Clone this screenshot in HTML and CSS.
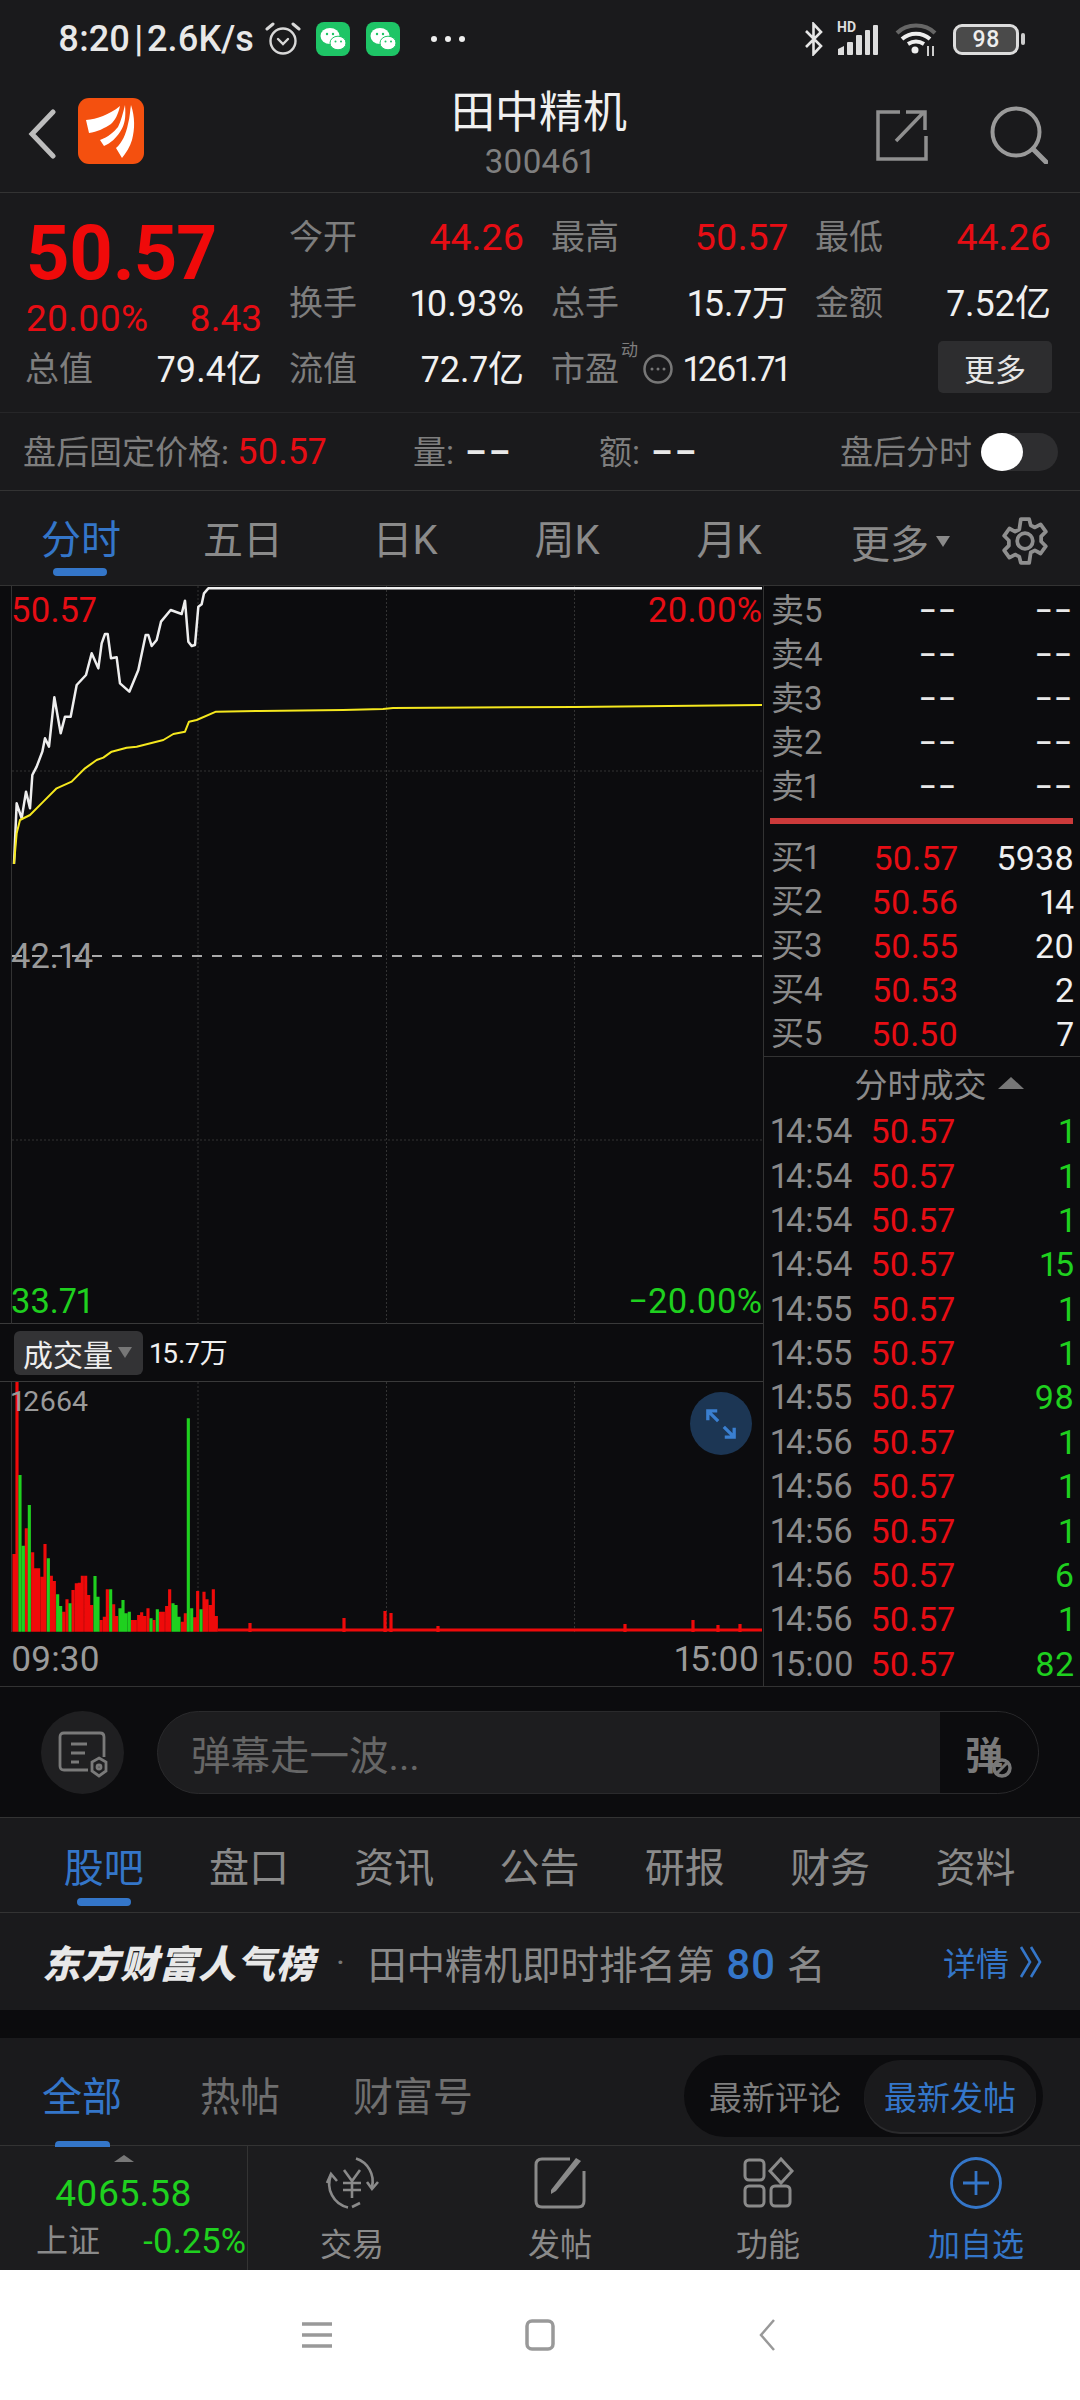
FILE: index.html
```html
<!DOCTYPE html>
<html lang="zh">
<head>
<meta charset="utf-8">
<title>田中精机</title>
<link rel="stylesheet" href="styles.css">
</head>
<body>
<div class="app">
  <div class="status">
    <span class="clock">8:20 | 2.6K/s</span>
    <svg class="st-alarm" viewBox="0 0 36 34"><g fill="none" stroke="#d8d8d8" stroke-width="2.4" stroke-linecap="round"><circle cx="18" cy="19" r="12.5"/><path d="M2 7l6-5M34 7l-6-5" stroke-width="3"/><path d="M13 17l5 5 5-5"/></g></svg>
    <svg class="st-wx" viewBox="0 0 34 34"><rect width="34" height="34" rx="8" fill="#1ec566"/><ellipse cx="14" cy="14" rx="9.5" ry="8" fill="#fff"/><ellipse cx="22" cy="21" rx="8" ry="6.8" fill="#fff" stroke="#1ec566"/><circle cx="11" cy="12" r="1.2" fill="#1ec566"/><circle cx="17" cy="12" r="1.2" fill="#1ec566"/><circle cx="19.500" cy="19.500" r="1" fill="#1ec566"/><circle cx="25" cy="19.500" r="1" fill="#1ec566"/></svg>
    <svg class="st-wx st-wx2" viewBox="0 0 34 34"><rect width="34" height="34" rx="8" fill="#1ec566"/><ellipse cx="14" cy="14" rx="9.5" ry="8" fill="#fff"/><ellipse cx="22" cy="21" rx="8" ry="6.8" fill="#fff" stroke="#1ec566"/><circle cx="11" cy="12" r="1.2" fill="#1ec566"/><circle cx="17" cy="12" r="1.2" fill="#1ec566"/><circle cx="19.500" cy="19.500" r="1" fill="#1ec566"/><circle cx="25" cy="19.500" r="1" fill="#1ec566"/></svg>
    <svg class="st-dots" viewBox="0 0 37 8"><circle cx="4" cy="4" r="3" fill="#eee"/><circle cx="18" cy="4" r="3" fill="#eee"/><circle cx="32" cy="4" r="3" fill="#eee"/></svg>
    <span class="st-fill"></span>
    <svg class="st-bt" viewBox="0 0 20 34"><path d="M2 9l15 15-7.500 8V2L17 10 2 25" fill="none" stroke="#e6e6e6" stroke-width="2.600"/></svg>
    <div class="st-signal">
      <span class="st-hd">HD</span>
      <svg class="st-bars" viewBox="0 0 42 30"><g fill="#ddd"><path d="M1 24l6-3v9H1z"/><rect x="10" y="17" width="6" height="13" rx="1"/><rect x="19" y="10" width="6" height="20" rx="1" fill="#ddd"/><rect x="28" y="5" width="5" height="25" rx="1"/><rect x="36" y="0" width="5" height="30" rx="1"/></g></svg>
    </div>
    <svg class="st-wifi" viewBox="0 0 42 34"><g fill="none" stroke-width="4"><path d="M2 11C12 1 30 1 40 11" stroke="#666"/><path d="M7 17c8-7 20-7 28 0M13 22c5-3 11-3 16 0" stroke="#eee"/></g><circle cx="20" cy="28" r="3.500" fill="#eee"/><path d="M33 24v10M38 24v10" stroke="#ccc" stroke-width="2"/></svg>
    <div class="st-batt"><span class="st-batt-num">98</span></div>
    <span class="st-cap"></span>
  </div>

  <header class="header">
    <svg class="back" viewBox="0 0 28 50"><path d="M25 3L4 25l21 22" fill="none" stroke="#bdbdbd" stroke-width="5" stroke-linecap="round"/></svg>
    <svg class="logo" viewBox="0 0 66 66"><rect width="66" height="66" rx="11" fill="#f4500f"/><g fill="#fff"><path d="M8 22c11-1 23-5 34-14-2 9-5 14-9 18-6 4-14 8-22 9z"/><path d="M22 42c8-3 14-8 18-13 3-6 5-14 7-22 1 12 0 20-5 27-4 6-9 11-16 14z"/><path d="M38 50c6-5 10-14 12-24 2-7 2-14 3-19 4 12 4 24 1 35-2 7-6 13-10 18z"/></g></svg>
    <div class="title">
      <div class="title-name">田中精机</div>
      <div class="title-code">300461</div>
    </div>
    <svg class="share" viewBox="0 0 52 52"><path d="M24 3H2v47h48V27" fill="none" stroke="#8f8f8f" stroke-width="3.500"/><path d="M20 32L47 4M30 3h19v18" fill="none" stroke="#8f8f8f" stroke-width="3.500"/></svg>
    <svg class="search" viewBox="0 0 58 58"><circle cx="26" cy="26" r="23.500" fill="none" stroke="#9a9a9a" stroke-width="4"/><path d="M43 43l13 13" stroke="#9a9a9a" stroke-width="5" stroke-linecap="round"/></svg>
  </header>

  <section class="quote">
    <div class="big">
      <div class="big-price">50.57</div>
      <div class="big-change"><span>20.00%</span><span>8.43</span></div>
    </div>
    <div class="cell"><span class="lab">今开</span><span class="val red">44.26</span></div>
    <div class="cell"><span class="lab">最高</span><span class="val red">50.57</span></div>
    <div class="cell"><span class="lab">最低</span><span class="val red">44.26</span></div>
    <div class="cell"><span class="lab">换手</span><span class="val">10.93%</span></div>
    <div class="cell"><span class="lab">总手</span><span class="val">15.7万</span></div>
    <div class="cell"><span class="lab">金额</span><span class="val">7.52亿</span></div>
    <div class="cell"><span class="lab">总值</span><span class="val">79.4亿</span></div>
    <div class="cell"><span class="lab">流值</span><span class="val">72.7亿</span></div>
    <div class="cell pe"><span class="lab">市盈</span><span class="pe-sup">动</span><svg class="pe-icon" viewBox="0 0 30 30"><circle cx="15" cy="15" r="13.500" fill="none" stroke="#777" stroke-width="2.500"/><circle cx="9" cy="15" r="1.500" fill="#777"/><circle cx="15" cy="15" r="1.500" fill="#777"/><circle cx="21" cy="15" r="1.500" fill="#777"/></svg><span class="val pe-val">1261.71</span></div>
    <div class="cell more-cell"><button class="more">更多</button></div>
  </section>

  <section class="after">
    <span class="a-lab a-price">盘后固定价格: <b class="red">50.57</b></span>
    <span class="a-lab a-vol">量: <b class="a-dash">––</b></span>
    <span class="a-lab a-amt">额: <b class="a-dash">––</b></span>
    <span class="a-lab a-switch">盘后分时</span>
    <span class="toggle"><span class="knob"></span></span>
  </section>

  <nav class="tabs">
    <span class="tab active">分时<i class="bar"></i></span>
    <span class="tab">五日</span>
    <span class="tab">日K</span>
    <span class="tab">周K</span>
    <span class="tab">月K</span>
    <div class="tab-last">
      <span class="tab-more">更多</span><span class="tri"></span>
      <svg class="gear" viewBox="0 0 48 48"><g fill="none" stroke="#8f8f8f" stroke-width="3.600" stroke-linejoin="round"><path d="M20 3h8l1.500 6 4 2 5.500-3 5 7-4.500 4.500v5L44 29l-5 7-5.500-3-4 2L28 45h-8l-1.500-6-4-2L9 40l-5-7 4.500-4.500v-5L4 19l5-7 5.500 3 4-2z"/><circle cx="24" cy="24" r="7.500"/></g></svg>
    </div>
  </nav>

  <main class="market">
    <div class="charts">
      <div class="price-area">
        <svg class="price-svg" viewBox="0 586 763 738">
          <g fill="none" stroke="#333" stroke-width="1">
            <path d="M11.500 586V1324"/>
            <path d="M198 586V1324M386.500 586V1324M574.500 586V1324M12 771H762M12 1140H762" stroke-dasharray="2 2"/>
          </g>
          <path d="M12 956H762" fill="none" stroke="#aaa" stroke-width="2" stroke-dasharray="10 10"/>
          <g transform="translate(0 570) scale(.33333)" fill="none" stroke-linejoin="round">
            <path stroke="#eee" stroke-width="7.500" d="M42 882L50 700L65 745L78 665L90 715L97 615L110 590L127 545L135 505L147 530L163 382L182 490L195 440L212 440L230 345L258 315L275 250L295 295L305 220L315 192L323 192L333 265L350 262L360 340L388 365L415 300L437 195L445 195L455 228L470 210L483 155L512 120L545 132L555 92L565 215L575 228L585 225L595 110L605 103L612 70L625 55L2286 55"/>
            <path stroke="#f5e81e" stroke-width="6" d="M42 882L50 790L60 750L90 735L130 695L170 655L215 635L255 595L290 570L310 563L335 545L380 533L410 530L490 510L520 492L555 485L567 455L590 450L648 425L780 423"/>
          </g>
          <path fill="none" stroke="#f5e81e" stroke-width="2" d="M260 711L343 710L383 709L393 708L575 707L762 705"/>
        </svg>
        <span class="p-label p-tl red">50.57</span>
        <span class="p-label p-tr red">20.00%</span>
        <span class="p-label p-ml">42.14</span>
        <span class="p-label p-bl green">33.71</span>
        <span class="p-label p-br green">−20.00%</span>
      </div>
      <div class="vol-head">
        <span class="vol-pill">成交量<i class="vol-tri"></i></span>
        <span class="vol-num">15.7万</span>
      </div>
      <div class="vol-area">
        <svg class="vol-svg" viewBox="0 1382 763 250">
          <g fill="none" stroke="#333" stroke-width="1">
            <path d="M11.500 1382V1632"/>
            <path d="M198 1382V1632M386.500 1382V1632M574.500 1382V1632" stroke-dasharray="2 2"/>
          </g>
          <g transform="translate(0 1380) scale(.33333)" fill="none" stroke-width="9.400">
            <path stroke="#ef0a0a" d="M42 755V522M51 755V5M79 755V445M98 755V517M107 755V565M116 755V565M126 755V590M135 755V492M154 755V587M163 755V603M191 755V695M201 755V658M219 755V630M229 755V610M238 755V608M247 755V587M257 755V587M266 755V645M275 755V675M303 755V720M313 755V710M322 755V628M341 755V673M350 755V708M397 755V720M406 755V720M416 755V705M425 755V697M434 755V708M444 755V685M462 755V720M481 755V695M490 755V695M500 755V678M509 755V628M547 755V725M556 755V700M584 755V712M593 755V633M612 755V635M621 755V658M631 755V675M640 755V628M649 755V708"/>
            <path stroke="#1fd01f" d="M60 755V285M70 755V497M88 755V375M145 755V535M173 755V643M182 755V678M210 755V670M285 755V588M294 755V650M332 755V628M360 755V685M369 755V660M378 755V700M388 755V695M453 755V715M472 755V688M519 755V670M528 755V675M537 755V710M565 755V115M575 755V685M603 755V688"/>
          </g>
          <path fill="none" stroke="#ef0a0a" stroke-width="3.200" d="M218 1630H762M250 1632V1623M344 1632V1618M385 1632V1611M391 1632V1613M438 1632V1626M625 1632V1624M693 1632V1620M718 1632V1625M740 1632V1624"/>
        </svg>
        <span class="vol-max">12664</span>
        <button class="expand"><svg viewBox="0 0 34 34"><path d="M3 13V3h10M3 3l11 11M31 21v10H21M31 31L20 20" fill="none" stroke="#3a7fd0" stroke-width="3.500"/></svg></button>
      </div>
      <div class="times"><span>09:30</span><span>15:00</span></div>
    </div>

    <aside class="book">
      <div class="asks">
        <div class="row"><span class="k">卖5</span><span class="p dash">––</span><span class="q dash">––</span></div>
        <div class="row"><span class="k">卖4</span><span class="p dash">––</span><span class="q dash">––</span></div>
        <div class="row"><span class="k">卖3</span><span class="p dash">––</span><span class="q dash">––</span></div>
        <div class="row"><span class="k">卖2</span><span class="p dash">––</span><span class="q dash">––</span></div>
        <div class="row"><span class="k">卖1</span><span class="p dash">––</span><span class="q dash">––</span></div>
      </div>
      <div class="split"></div>
      <div class="bids">
        <div class="row"><span class="k">买1</span><span class="p red">50.57</span><span class="q">5938</span></div>
        <div class="row"><span class="k">买2</span><span class="p red">50.56</span><span class="q">14</span></div>
        <div class="row"><span class="k">买3</span><span class="p red">50.55</span><span class="q">20</span></div>
        <div class="row"><span class="k">买4</span><span class="p red">50.53</span><span class="q">2</span></div>
        <div class="row"><span class="k">买5</span><span class="p red">50.50</span><span class="q">7</span></div>
      </div>
      <div class="ticks-head">分时成交<i class="up-tri"></i></div>
      <div class="ticks">
        <div class="row tick"><span class="k">14:54</span><span class="p red">50.57</span><span class="q green">1</span></div>
        <div class="row tick"><span class="k">14:54</span><span class="p red">50.57</span><span class="q green">1</span></div>
        <div class="row tick"><span class="k">14:54</span><span class="p red">50.57</span><span class="q green">1</span></div>
        <div class="row tick"><span class="k">14:54</span><span class="p red">50.57</span><span class="q green">15</span></div>
        <div class="row tick"><span class="k">14:55</span><span class="p red">50.57</span><span class="q green">1</span></div>
        <div class="row tick"><span class="k">14:55</span><span class="p red">50.57</span><span class="q green">1</span></div>
        <div class="row tick"><span class="k">14:55</span><span class="p red">50.57</span><span class="q green">98</span></div>
        <div class="row tick"><span class="k">14:56</span><span class="p red">50.57</span><span class="q green">1</span></div>
        <div class="row tick"><span class="k">14:56</span><span class="p red">50.57</span><span class="q green">1</span></div>
        <div class="row tick"><span class="k">14:56</span><span class="p red">50.57</span><span class="q green">1</span></div>
        <div class="row tick"><span class="k">14:56</span><span class="p red">50.57</span><span class="q green">6</span></div>
        <div class="row tick"><span class="k">14:56</span><span class="p red">50.57</span><span class="q green">1</span></div>
        <div class="row tick"><span class="k">15:00</span><span class="p red">50.57</span><span class="q green">82</span></div>
      </div>
    </aside>
  </main>

  <section class="danmu">
    <div class="dm-icon"><svg viewBox="0 0 50 48"><g fill="none" stroke="#7a7a7a" stroke-width="2.800"><path d="M30 39H6q-4 0-4-4V6q0-4 4-4h36q4 0 4 4v20"/><path d="M13 13h16M13 22h14M13 31h8"/><path d="M41 27l7 4v9l-7 5-7-5v-9z"/><circle cx="41" cy="36" r="2"/></g></svg></div>
    <div class="dm-input">
      <span class="dm-text">弹幕走一波...</span>
      <span class="dm-btn"><b>弹</b><svg class="dm-ban" viewBox="0 0 20 20"><circle cx="10" cy="10" r="8" fill="none" stroke="#777" stroke-width="3.500"/><path d="M5 15L15 5" stroke="#777" stroke-width="3"/></svg></span>
    </div>
  </section>

  <nav class="subtabs">
    <span class="sub active">股吧<i class="bar"></i></span>
    <span class="sub">盘口</span>
    <span class="sub">资讯</span>
    <span class="sub">公告</span>
    <span class="sub">研报</span>
    <span class="sub">财务</span>
    <span class="sub">资料</span>
  </nav>

  <section class="rank">
    <span class="rank-brand">东方财富人气榜</span>
    <span class="rank-dot">·</span>
    <span class="rank-text">田中精机即时排名第 <b class="rank-num">80</b> 名</span>
    <span class="rank-more">详情<svg viewBox="0 0 24 34"><path d="M2 2l9 15-9 15M12 2l9 15-9 15" fill="none" stroke="#3476c9" stroke-width="2.600"/></svg></span>
  </section>

  <div class="gap"></div>

  <section class="posts">
    <span class="post-tab active">全部<i class="bar"></i></span>
    <span class="post-tab">热帖</span>
    <span class="post-tab post-tab-last">财富号</span>
    <div class="sort">
      <span class="sort-a">最新评论</span>
      <span class="sort-b">最新发帖</span>
    </div>
  </section>

  <footer class="dock">
    <div class="index">
      <i class="idx-tri"></i>
      <div class="idx-val green">4065.58</div>
      <div class="idx-row"><span class="idx-name">上证</span><span class="idx-pct green">-0.25%</span></div>
    </div>
    <div class="dock-item">
      <svg viewBox="0 0 60 52"><g fill="none" stroke="#8a8a8a" stroke-width="2.600"><path d="M34 1.500A24 24 0 0 1 50 30M26 50.500A24 24 0 0 1 9 18"/><path d="M5 26l4-9 6 7M56 25l-6 7-5-7M30 50l8-4"/><path d="M22 13l8 11 8-11M30 24v17M21 26h18M21 33h18"/></g></svg>
      <span>交易</span>
    </div>
    <div class="dock-item">
      <svg viewBox="0 0 60 52"><g fill="none" stroke="#8a8a8a" stroke-width="3"><path d="M40 2H12q-6 0-6 6v36q0 6 6 6h36q6 0 6-6V14"/></g><path d="M21 33L46 1l5 3-25 30-5 3z" fill="#8a8a8a"/></svg>
      <span>发帖</span>
    </div>
    <div class="dock-item">
      <svg viewBox="0 0 60 52"><g fill="none" stroke="#8a8a8a" stroke-width="3"><rect x="7" y="3" width="19" height="20" rx="4"/><path d="M43 2l11 12-11 12-11-12z"/><rect x="7" y="29" width="19" height="20" rx="4"/><rect x="33" y="29" width="19" height="20" rx="4"/></g></svg>
      <span>功能</span>
    </div>
    <div class="dock-item accent">
      <svg viewBox="0 0 60 52"><g fill="none" stroke="#3476c9" stroke-width="2.800"><circle cx="30" cy="26" r="24.500"/><path d="M17 26h26M30 14v24"/></g></svg>
      <span>加自选</span>
    </div>
  </footer>

  <div class="sysnav">
    <svg class="sys-menu" viewBox="0 0 30 26"><path d="M0 2h30M0 13h30M0 24h30" stroke="#999" stroke-width="3.500"/></svg>
    <svg class="sys-home" viewBox="0 0 30 32"><rect x="2" y="2" width="26" height="28" rx="5" fill="none" stroke="#999" stroke-width="3.500"/></svg>
    <svg class="sys-back" viewBox="0 0 18 32"><path d="M16 1L3 16l13 15" fill="none" stroke="#999" stroke-width="2.500"/></svg>
  </div>
</div>
</body>
</html>
```

FILE: styles.css
```css
* { box-sizing: border-box; }
html, body { margin: 0; padding: 0; background: #1a1a1c; }
body { font-family: Roboto, "Noto Sans CJK SC", sans-serif; color: #8a8a8a; }
.app { width: 1080px; height: 2400px; display: flex; flex-direction: column; overflow: hidden; background: #1a1a1c; font-variant-numeric: proportional-nums; }
i { display: block; font-style: normal; }
svg { display: block; flex: none; }
button { border: 0; padding: 0; font: inherit; }
.red { color: #e60d14; }
.green { color: #1fd01f; }

/* status bar */
.status { height: 78px; padding: 0 0 0 58px; display: flex; align-items: center; }
.clock { font-size: 36px; font-weight: 500; color: #e8e8e8; width: 205px; white-space: nowrap; word-spacing: -5px; }
.st-alarm { width: 36px; height: 34px; margin-left: 2px; }
.st-wx { width: 34px; height: 34px; margin-left: 15px; }
.st-wx2 { margin-left: 16px; }
.st-dots { width: 37px; height: 8px; margin-left: 30px; }
.st-fill { flex: 1; }
.st-bt { width: 20px; height: 34px; }
.st-signal { position: relative; width: 42px; height: 32px; margin-left: 13px; }
.st-bars { width: 42px; height: 30px; position: absolute; left: 0; bottom: 0; }
.st-hd { position: absolute; left: 0; top: -3px; font-size: 14px; line-height: 14px; font-weight: 700; color: #ddd; }
.st-wifi { width: 42px; height: 34px; margin-left: 16px; }
.st-batt { width: 66px; height: 31px; margin-left: 16px; border: 3px solid #ddd; border-radius: 9px; background: #4a4a4a; background-clip: padding-box; display: flex; align-items: center; justify-content: center; }
.st-batt-num { font-size: 23px; font-weight: 500; color: #eee; line-height: 1; }
.st-cap { width: 4px; height: 12px; background: #ccc; margin: 0 55px 0 2px; border-radius: 2px; }

/* header */
.header { height: 115px; display: flex; align-items: center; padding-left: 28px; border-bottom: 1px solid #333; position: relative; }
.back { width: 28px; height: 50px; margin-top: -2px; }
.logo { width: 66px; height: 66px; margin: -8px 0 0 22px; }
.title { width: 340px; margin-left: 225px; text-align: center; margin-top: -2px; }
.title-name { font-size: 44px; line-height: 50px; color: #f0f0f0; }
.title-code { font-size: 33px; line-height: 38px; color: #7f7f7f; margin-top: 5px; }
.share { width: 52px; height: 52px; margin-left: 167px; }
.search { width: 58px; height: 58px; margin-left: 62px; }

/* quote */
.quote { height: 220px; padding: 12px 0 0 26px; display: grid; grid-template-columns: 236px 234px 236px 235px; grid-template-rows: repeat(3, 66px); column-gap: 28px; border-bottom: 1px solid #262628; }
.big { grid-row: span 2; grid-column: 1; position: relative; }
.big-price { font-size: 76px; font-weight: 700; line-height: 80px; color: #f00a0a; margin-top: 8px; letter-spacing: -1px; }
.big-change { display: flex; justify-content: space-between; font-size: 37px; line-height: 40px; color: #e60d14; margin-top: 6px; }
.cell { display: flex; align-items: center; justify-content: space-between; }
.big + .cell { grid-column: 2; }
.lab { font-size: 34px; line-height: 50px; color: #7e7e7e; margin: -3px 0 0 -1px; }
.val { font-size: 36px; line-height: 50px; color: #f0f0f0; margin-top: 0; }
.val.red { color: #e60d14; font-size: 37.500px; margin-top: -2px; }
.pe { justify-content: flex-start; position: relative; }
.pe-sup { font-size: 17px; color: #7e7e7e; align-self: flex-start; margin-top: -1px; margin-left: 2px; }
.pe-icon { width: 30px; height: 30px; margin: -2px 0 0 5px; }
.pe-val { margin-left: auto; font-size: 35px; letter-spacing: -1.200px; }
.more-cell { justify-content: flex-end; }
.more { width: 114px; height: 52px; border-radius: 5px; background: #2d2d2f; color: #e6e6e6; font-size: 31px; margin: -6px -1px 0 0; }

/* after hours */
.after { height: 78px; display: flex; align-items: center; padding: 2px 0 0 23px; border-bottom: 1px solid #333; font-size: 33px; position: relative; line-height: 44px; }
.a-lab { color: #7e7e7e; white-space: nowrap; }
.a-price { width: 390px; }
.a-vol { width: 186px; }
.a-amt { width: 241px; }
.a-price b { font-weight: 400; font-size: 36px; }
.a-dash { color: #e8e8e8; font-weight: 700; letter-spacing: 3px; margin-left: 3px; }
.a-switch { width: 141px; }
.toggle { width: 77px; height: 38px; border-radius: 19px; background: #2e2e30; position: relative; margin-top: -2px; }
.knob { position: absolute; left: 0; top: 0; width: 42px; height: 38px; border-radius: 50%; background: #fff; }

/* tabs */
.tabs { height: 95px; padding-top: 6px; display: grid; grid-template-columns: repeat(5, 162px) 1fr; align-items: center; border-bottom: 1px solid #333; }
.tab { position: relative; font-size: 40px; color: #8a8a8a; text-align: center; line-height: 50px; }
.tab.active { color: #3476c9; }
.tab .bar { position: absolute; left: 53px; top: 52px; width: 54px; height: 8px; border-radius: 4px; background: #3476c9; }
.tab-last { display: flex; align-items: center; padding-left: 41px; }
.tab-more { font-size: 39px; color: #8a8a8a; }
.tri { width: 0; height: 0; margin-left: 7px; border-left: 7px solid transparent; border-right: 7px solid transparent; border-top: 11px solid #8a8a8a; }
.gear { width: 50px; height: 50px; margin-left: 50px; }

/* market */
.market { height: 1101px; display: flex; background: #0c0c0e; border-bottom: 1px solid #333; }
.charts { width: 764px; border-right: 1px solid #333; display: flex; flex-direction: column; }
.price-area { height: 738px; position: relative; border-bottom: 1px solid #3a3a3a; }
.price-svg { width: 763px; height: 738px; }
.p-label { position: absolute; font-size: 34.500px; line-height: 38px; color: #9a9a9a; }
.p-label.red { color: #e60d14; }
.p-label.green { color: #1fd01f; }
.p-tl { left: 11px; top: 5px; }
.p-tr { right: 1px; top: 5px; }
.p-ml { left: 11px; top: 351px; }
.p-bl { left: 11px; top: 696px; }
.p-br { right: 1px; top: 696px; }
.vol-head { height: 58px; display: flex; align-items: center; padding-left: 14px; border-bottom: 1px solid #3a3a3a; }
.vol-pill { width: 129px; height: 44px; border-radius: 6px; background: #333335; color: #eee; font-size: 30px; display: flex; align-items: center; padding-left: 9px; }
.vol-tri { margin-left: 5px; width: 0; height: 0; border-left: 7px solid transparent; border-right: 7px solid transparent; border-top: 11px solid #777; }
.vol-num { font-size: 28px; color: #f0f0f0; margin: -4px 0 0 7px; }
.vol-area { height: 250px; position: relative; }
.vol-svg { width: 763px; height: 250px; }
.vol-max { position: absolute; left: 11px; top: 4px; font-size: 28.500px; line-height: 32px; color: #9a9a9a; }
.expand { position: absolute; left: 690px; top: 10px; width: 62px; height: 63px; border-radius: 50%; background: #1c3654; display: flex; align-items: center; justify-content: center; }
.expand svg { width: 32px; height: 32px; }
.times { flex: 1; display: flex; justify-content: space-between; align-items: center; padding: 0 4px 0 11px; font-size: 35px; color: #9a9a9a; }

/* order book */
.book { flex: 1; padding: 3px 6px 0 7px; display: flex; flex-direction: column; }
.row { height: 44px; display: grid; grid-template-columns: 60px 127px 1fr; align-items: center; font-size: 34px; line-height: 44px; }
.k { color: #8a8a8a; white-space: nowrap; font-size: 33px; }
.p { text-align: right; }
.q { text-align: right; color: #f0f0f0; }
.q.green { color: #1fd01f; }
.dash { color: #e8e8e8; font-size: 26px; font-weight: 700; letter-spacing: 3px; }
.split { height: 6px; margin: 9px 1px 12px -1px; background: #cc3a3a; }
.ticks-head { height: 53px; margin: 0 -6px 0 -7px; border-top: 1px solid #333; display: flex; align-items: center; justify-content: center; font-size: 33px; color: #8a8a8a; padding-left: 34px; }
.up-tri { width: 0; height: 0; margin-left: 11px; border-left: 13px solid transparent; border-right: 13px solid transparent; border-bottom: 12px solid #777; }
.tick { height: 44.400px; grid-template-columns: 60px 124px 1fr; }
.tick .k { font-size: 34.500px; }

/* danmu */
.danmu { height: 131px; display: flex; align-items: center; padding: 0 41px; background: #0c0c0e; border-bottom: 1px solid #333; }
.dm-icon { width: 83px; height: 83px; border-radius: 50%; background: #1f1f21; display: flex; align-items: center; justify-content: center; }
.dm-icon svg { width: 50px; height: 48px; margin-top: 6px; }
.dm-input { width: 882px; height: 83px; margin-left: 33px; border-radius: 42px; background: #1d1d1f; border: 1px solid #2a2a2c; display: flex; align-items: center; overflow: hidden; }
.dm-text { flex: 1; padding-left: 33px; font-size: 39.500px; color: #666; }
.dm-btn { width: 98px; height: 100%; background: #0c0c0e; position: relative; display: flex; align-items: center; padding-left: 25px; }
.dm-btn b { font-size: 38px; color: #7a7a7a; font-weight: 700; }
.dm-ban { position: absolute; left: 52px; top: 46px; width: 20px; height: 20px; }

/* sub tabs */
.subtabs { height: 95px; padding: 7px 0 0 31px; display: grid; grid-template-columns: repeat(7, 145.300px); align-items: center; border-bottom: 1px solid #333; }
.sub { position: relative; font-size: 40px; line-height: 50px; text-align: center; color: #8a8a8a; }
.sub.active { color: #3476c9; }
.sub .bar { position: absolute; left: 46px; top: 54px; width: 54px; height: 8px; border-radius: 4px; background: #3476c9; }

/* rank */
.rank { height: 97px; display: flex; align-items: center; padding-left: 42px; }
.rank-brand { font-size: 38px; font-weight: 900; font-style: italic; color: #e8e8e8; width: 294px; white-space: nowrap; letter-spacing: 1px; }
.rank-dot { width: 32px; font-size: 34px; color: #777; }
.rank-text { font-size: 38.500px; color: #8a8a8a; white-space: nowrap; }
.rank-num { color: #3476c9; font-weight: 500; font-size: 42px; margin: 0 2px; }
.rank-more { margin-left: auto; margin-right: 37px; display: flex; align-items: center; font-size: 33px; color: #3476c9; }
.rank-more svg { width: 24px; height: 34px; margin-left: 10px; }
.gap { height: 28px; background: #0b0b0d; }

/* posts */
.posts { height: 108px; display: flex; align-items: center; padding: 12px 0 0 42px; position: relative; border-bottom: 1px solid #333; }
.post-tab { position: relative; font-size: 40px; line-height: 50px; color: #6f6f6f; margin-right: 78px; }
.post-tab-last { margin-left: -5px; }
.post-tab.active { color: #3476c9; }
.post-tab .bar { position: absolute; left: 13px; top: 68px; width: 55px; height: 6px; border-radius: 4px 4px 0 0; background: #3476c9; }
.sort { position: absolute; left: 684px; top: 17px; width: 359px; height: 82px; border-radius: 41px; background: #0c0c0e; display: flex; align-items: center; font-size: 33px; color: #7e7e7e; }
.sort-a { margin-left: 25px; width: 155px; white-space: nowrap; }
.sort-b { width: 172px; height: 72px; border-radius: 36px; background: #1a1a1c; color: #3476c9; display: flex; align-items: center; justify-content: center; white-space: nowrap; box-shadow: 0 2px 0 #2a2a2c; }

/* dock */
.dock { height: 124px; display: grid; grid-template-columns: 248px repeat(4, 208px); background: #1c1c1e; }
.index { position: relative; border-right: 1px solid #333; display: flex; flex-direction: column; align-items: center; }
.idx-tri { position: absolute; left: 114px; top: 9px; width: 0; height: 0; border-left: 10px solid transparent; border-right: 10px solid transparent; border-bottom: 7px solid #777; }
.idx-val { font-size: 37px; line-height: 44px; margin-top: 26px; }
.idx-row { width: 100%; display: flex; justify-content: space-between; align-items: center; padding: 0 1px 0 36px; margin-top: 3px; line-height: 44px; }
.idx-name { font-size: 32px; color: #8a8a8a; }
.idx-pct { font-size: 34.500px; }
.dock-item { display: flex; flex-direction: column; align-items: center; font-size: 32px; color: #8a8a8a; padding-top: 11px; line-height: 44px; }
.dock-item svg { width: 60px; height: 52px; margin-bottom: 14px; }
.dock-item.accent { color: #3476c9; }

/* system nav */
.sysnav { flex: 1; background: #fff; display: flex; align-items: center; padding-left: 302px; }
.sys-menu { width: 30px; height: 26px; }
.sys-home { width: 30px; height: 32px; margin-left: 193px; }
.sys-back { width: 18px; height: 32px; margin-left: 203px; }
```
